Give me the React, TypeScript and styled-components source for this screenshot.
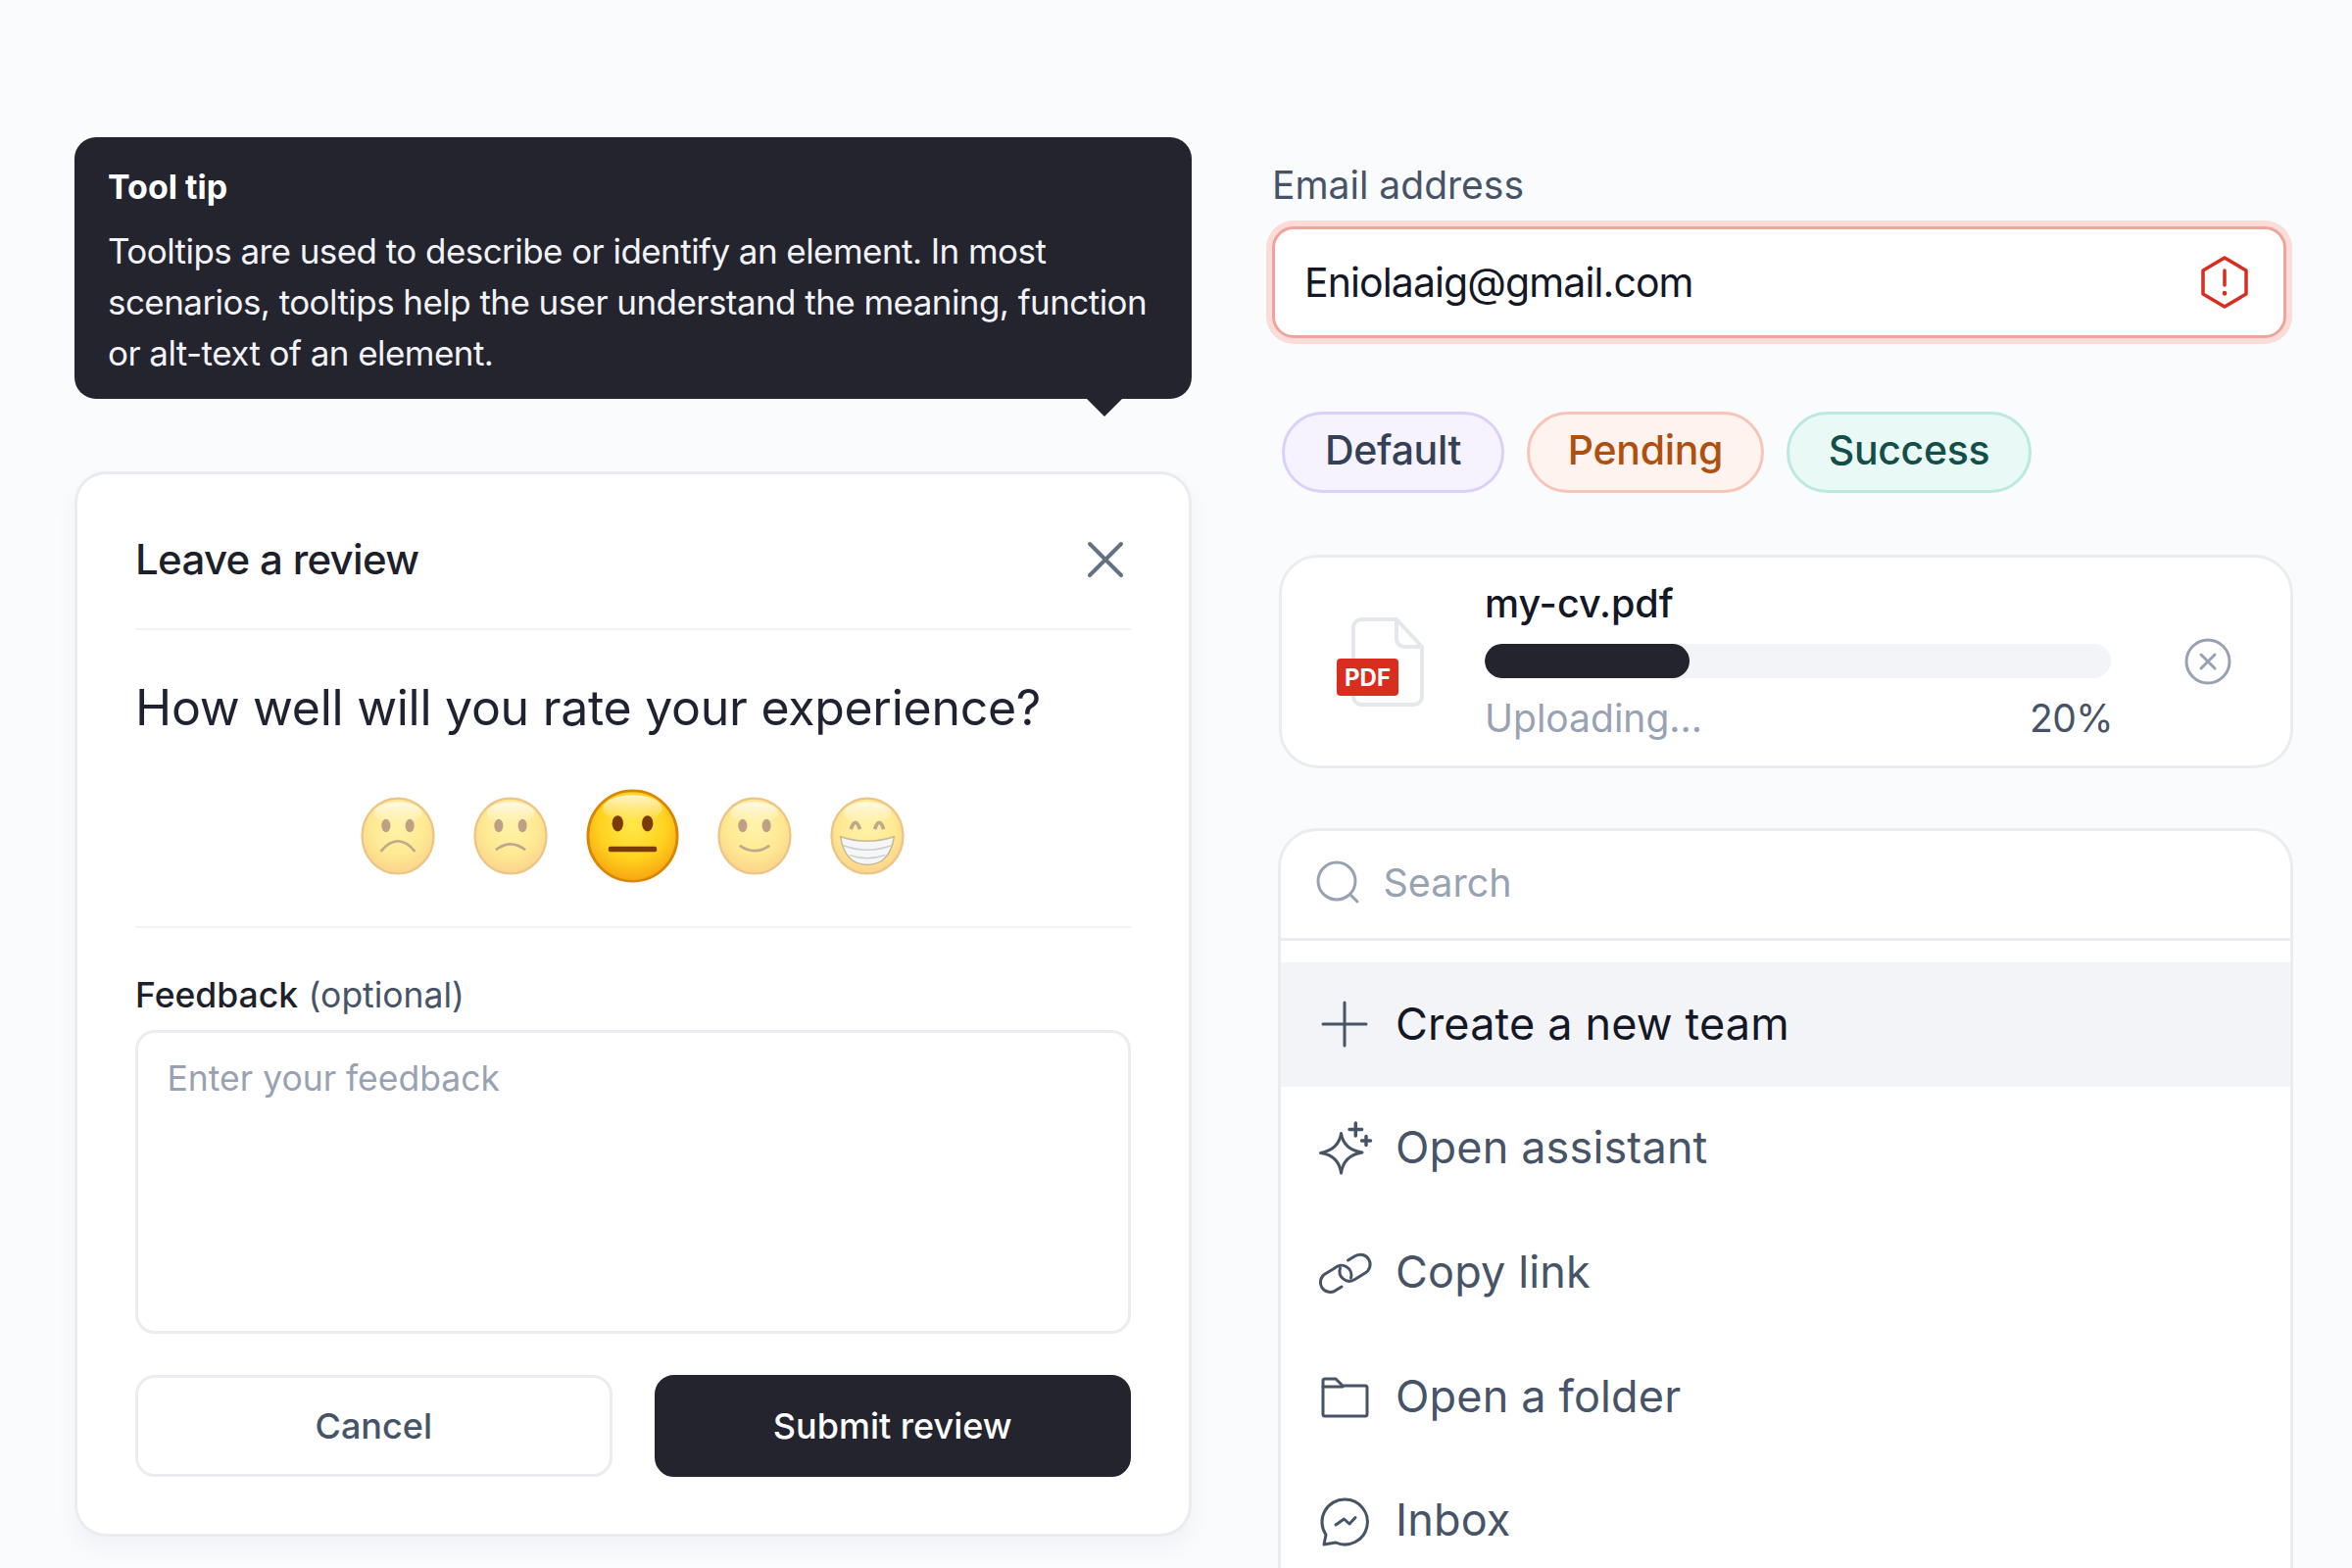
import React from 'react';
import styled, { createGlobalStyle } from 'styled-components';

const Global = createGlobalStyle`
  html, body { margin: 0; padding: 0; background: #fafbfd; }
  * { box-sizing: border-box; }
  body { font-family: Inter, "Noto Sans", sans-serif; -webkit-font-smoothing: antialiased; }
`;

const Page = styled.div`
  width: 2400px;
  height: 1600px;
  overflow: hidden;
  background: #fafbfd;
  display: grid;
  grid-template-columns: 1140px 1042px;
  column-gap: 82px;
  padding-left: 76px;
  align-items: start;
`;

const LeftColumn = styled.div`
  display: flex;
  flex-direction: column;
  padding-top: 140px;
`;

const Tooltip = styled.div`
  position: relative;
  height: 267px;
  background: #23242e;
  border-radius: 22px;
  padding: 27px 34px 0;
  color: #fff;
  &::after {
    content: '';
    position: absolute;
    right: 71px;
    bottom: -18px;
    border-left: 18px solid transparent;
    border-right: 18px solid transparent;
    border-top: 18px solid #23242e;
  }
`;

const TooltipTitle = styled.div`
  font-size: 34px;
  font-weight: 700;
  line-height: 48px;
`;

const TooltipBody = styled.div`
  margin-top: 15px;
  font-size: 35px;
  font-weight: 400;
  line-height: 52px;
  letter-spacing: -0.56px;
  white-space: nowrap;
  color: #f2f3f6;
`;

const Card = styled.div`
  margin: 74px 0 0;
  background: #fff;
  border: 3px solid #eaecf0;
  border-top-color: #e8eaee;
  border-radius: 32px;
  padding: 0 59px 58.5px;
  box-shadow: 0 12px 24px rgba(16, 24, 40, 0.04);
  display: flex;
  flex-direction: column;
`;

const CardHeader = styled.div`
  display: flex;
  align-items: center;
  justify-content: space-between;
  padding: 57px 0 39.5px;
  border-bottom: 2px solid #f2f4f7;
`;

const CardTitle = styled.div`
  font-size: 42px;
  line-height: 60px;
  font-weight: 500;
  color: #1d1f2a;
  letter-spacing: -0.7px;
`;

const CloseButton = styled.span`
  display: flex;
  margin-right: 7px;
  color: #667085;
`;

const Question = styled.div`
  margin-top: 49.5px;
  font-size: 50px;
  line-height: 60px;
  font-weight: 400;
  letter-spacing: -0.28px;
  color: #1f2230;
`;

const Faces = styled.div`
  margin-top: 53px;
  height: 96px;
  display: flex;
  align-items: center;
  justify-content: center;
  gap: 39px;
  padding: 0 1px 43.5px 0;
  box-sizing: content-box;
  border-bottom: 2px solid #f2f4f7;
`;

const FaceSvg = styled.svg<{ $active?: boolean }>`
  flex: none;
  width: ${p => (p.$active ? 95 : 76)}px;
  height: ${p => (p.$active ? 96 : 80)}px;
  opacity: ${p => (p.$active ? 1 : 0.48)};
`;

const FieldLabel = styled.div`
  margin-top: 49.5px;
  font-size: 35.5px;
  line-height: 40px;
  font-weight: 500;
  color: #1d1f2a;
`;

const Optional = styled.span`
  margin-left: 1px;
  font-weight: 400;
  color: #475467;
`;

const TextArea = styled.div`
  margin-top: 14.5px;
  height: 310px;
  border: 3px solid #eaecf0;
  border-radius: 20px;
  padding: 26px 29.5px;
  font-size: 35.5px;
  line-height: 42px;
  color: #98a2b3;
`;

const Buttons = styled.div`
  margin-top: 42px;
  display: flex;
  gap: 43px;
`;

const Button = styled.div<{ $primary?: boolean }>`
  flex: 1;
  height: 104px;
  display: flex;
  align-items: center;
  justify-content: center;
  border-radius: 20px;
  font-size: 36px;
  font-weight: 500;
  background: ${p => (p.$primary ? '#23242e' : '#fff')};
  color: ${p => (p.$primary ? '#fff' : '#475467')};
  border: 3px solid ${p => (p.$primary ? '#23242e' : '#eaecf0')};
`;

const RightColumn = styled.div`
  display: flex;
  flex-direction: column;
  padding-top: 167px;
  align-items: stretch;
`;

const EmailLabel = styled.div`
  font-size: 39px;
  line-height: 44px;
  color: #475467;
`;

const EmailInput = styled.div`
  margin: 20px 7px 0 0;
  height: 114px;
  background: #fff;
  border: 3px solid #f0a39c;
  border-radius: 22px;
  box-shadow: 0 0 0 6px #fbdcd8;
  display: flex;
  align-items: center;
  justify-content: space-between;
  padding: 0 35px 0 30px;
  font-size: 41px;
  letter-spacing: -0.9px;
  color: #141826;
`;

const Badges = styled.div`
  margin: 75px 0 0 10px;
  display: flex;
  gap: 23px;
`;

const tones = {
  default: { bg: '#f6f3fe', border: '#dcd0f9', color: '#344054', pad: 41 },
  pending: { bg: '#fef3ef', border: '#f7c5b8', color: '#b0500f', pad: 38.5 },
  success: { bg: '#e9f9f6', border: '#b9e9e1', color: '#134e48', pad: 40 },
};

const Badge = styled.div<{ $tone: keyof typeof tones }>`
  height: 83px;
  padding: 0 ${p => tones[p.$tone].pad}px 5px;
  display: flex;
  align-items: center;
  border-radius: 42px;
  font-size: 41px;
  font-weight: 500;
  letter-spacing: -0.3px;
  background: ${p => tones[p.$tone].bg};
  border: 3px solid ${p => tones[p.$tone].border};
  color: ${p => tones[p.$tone].color};
`;

const FileCard = styled.div`
  margin: 63px 0 0 7px;
  height: 218px;
  background: #fff;
  border: 3px solid #eaecf0;
  border-radius: 40px;
  display: flex;
  align-items: center;
  padding-left: 55px;
`;

const DocIcon = styled.svg`
  flex: none;
  width: 90px;
  height: 92px;
`;

const FileBody = styled.div`
  margin-left: 62px;
  width: 639px;
  padding-bottom: 3px;
  display: flex;
  flex-direction: column;
`;

const FileName = styled.div`
  font-size: 39.5px;
  line-height: 48px;
  font-weight: 500;
  color: #141826;
`;

const Track = styled.div`
  margin-top: 17px;
  height: 35px;
  border-radius: 18px;
  background: #f2f4f7;
  overflow: hidden;
`;

const Fill = styled.div`
  height: 100%;
  border-radius: 18px;
  background: #23242e;
`;

const FileFooter = styled.div`
  margin-top: 19px;
  display: flex;
  justify-content: space-between;
  font-size: 39px;
  line-height: 44px;
`;

const Uploading = styled.span`
  color: #98a2b3;
`;

const Percent = styled.span`
  margin-right: -2px;
  color: #475467;
  font-weight: 400;
  letter-spacing: -0.6px;
`;

const RemoveIcon = styled.svg`
  flex: none;
  margin-left: 75px;
  width: 48px;
  height: 48px;
`;

const MenuCard = styled.div`
  margin: 61px 0 0 6px;
  height: 800px;
  background: #fff;
  border: 3px solid #eaecf0;
  border-radius: 40px;
  overflow: hidden;
`;

const SearchRow = styled.div`
  height: 112px;
  border-bottom: 3px solid #eaecf0;
  display: flex;
  align-items: center;
  gap: 23px;
  padding: 0 0 3px 35.5px;
  font-size: 39.5px;
  color: #98a2b3;
`;

const SearchGlyph = styled.svg`
  flex: none;
  width: 46px;
  height: 46px;
`;

const IconBox = styled.svg`
  flex: none;
  width: 60px;
  height: 60px;
  color: #475467;
`;

const MenuLabel = styled.span`
  margin-top: -2px;
`;

const MenuList = styled.div`
  margin-top: 22px;
`;

const MenuRow = styled.div<{ $active?: boolean }>`
  height: 126.6px;
  display: flex;
  align-items: center;
  gap: 22px;
  padding-left: 35px;
  font-size: 45px;
  background: ${p => (p.$active ? '#f2f4f7' : 'transparent')};
  color: ${p => (p.$active ? '#141826' : '#475467')};
  letter-spacing: 0.15px;
`;

const Face: React.FC<{ kind: 'bad' | 'meh' | 'neutral' | 'good' | 'great'; active?: boolean }> = ({ kind, active }) => {
  const id = `face-${kind}`;
  return (
    <FaceSvg $active={active} viewBox="0 0 100 106" preserveAspectRatio="none" aria-hidden>
      <defs>
        <radialGradient id={id} cx="50%" cy="38%" r="68%">
          <stop offset="0%" stopColor="#ffe84a" />
          <stop offset="55%" stopColor="#ffd21f" />
          <stop offset="100%" stopColor="#f59a0c" />
        </radialGradient>
        <linearGradient id={`${id}-shine`} x1="0" y1="0" x2="0" y2="1">
          <stop offset="0%" stopColor="#fff" stopOpacity="0.75" />
          <stop offset="100%" stopColor="#fff" stopOpacity="0" />
        </linearGradient>
      </defs>
      <ellipse cx="50" cy="53" rx="48" ry="51" fill={`url(#${id})`} stroke="#d98605" strokeWidth="3" />
      <ellipse cx="50" cy="22" rx="32" ry="15" fill={`url(#${id}-shine)`} />
      {kind !== 'great' && (
        <>
          <ellipse cx="34" cy="39" rx="6" ry="9" fill="#7a3b06" />
          <ellipse cx="66" cy="39" rx="6" ry="9" fill="#7a3b06" />
        </>
      )}
      {kind === 'bad' && <path d="M27 74Q50 46 73 74" fill="none" stroke="#7a4a10" strokeWidth="3.5" />}
      {kind === 'meh' && <path d="M30 72Q50 56 70 72" fill="none" stroke="#7a4a10" strokeWidth="3.5" />}
      {kind === 'neutral' && <rect x="24" y="65" width="52" height="6" rx="2" fill="#7a3b06" />}
      {kind === 'good' && <path d="M30 66Q50 80 70 66" fill="none" stroke="#7a4a10" strokeWidth="3.5" />}
      {kind === 'great' && (
        <>
          <path d="M28 44Q34 26 40 44M60 44Q66 26 72 44" fill="none" stroke="#7a4a10" strokeWidth="5" />
          <path d="M14 54Q50 66 86 54Q80 92 50 92Q20 92 14 54Z" fill="#e9edf0" stroke="#8a6a2a" strokeWidth="2" />
          <path d="M18 66Q50 78 82 66M26 79Q50 87 74 79" fill="none" stroke="#8f98a1" strokeWidth="2" />
        </>
      )}
    </FaceSvg>
  );
};

const stroke = { fill: 'none', stroke: 'currentColor', strokeWidth: 3, strokeLinecap: 'round', strokeLinejoin: 'round' } as const;

export default function App() {
  return (
    <Page>
      <Global />
      <LeftColumn>
        <Tooltip>
          <TooltipTitle>Tool tip</TooltipTitle>
          <TooltipBody>
            Tooltips are used to describe or identify an element. In most
            <br />
            scenarios, tooltips help the user understand the meaning, function
            <br />
            or alt-text of an element.
          </TooltipBody>
        </Tooltip>
        <Card>
          <CardHeader>
            <CardTitle>Leave a review</CardTitle>
            <CloseButton>
              <svg width="38" height="38" viewBox="0 0 38 38" fill="none" stroke="currentColor" strokeWidth="4" strokeLinecap="round">
                <path d="M3 3L35 35M35 3L3 35" />
              </svg>
            </CloseButton>
          </CardHeader>
          <Question>How well will you rate your experience?</Question>
          <Faces>
            <Face kind="bad" />
            <Face kind="meh" />
            <Face kind="neutral" active />
            <Face kind="good" />
            <Face kind="great" />
          </Faces>
          <FieldLabel>
            Feedback <Optional>(optional)</Optional>
          </FieldLabel>
          <TextArea>Enter your feedback</TextArea>
          <Buttons>
            <Button>Cancel</Button>
            <Button $primary>Submit review</Button>
          </Buttons>
        </Card>
      </LeftColumn>
      <RightColumn>
        <EmailLabel>Email address</EmailLabel>
        <EmailInput>
          Eniolaaig@gmail.com
          <svg width="50" height="54" viewBox="0 0 50 54" fill="none" stroke="#d92d20" strokeWidth="3.5" strokeLinejoin="round" strokeLinecap="round">
            <path d="M25 2L47 15V39L25 52L3 39V15Z" />
            <path d="M25 15V30" />
            <path d="M25 38V38.5" strokeWidth="4.5" />
          </svg>
        </EmailInput>
        <Badges>
          <Badge $tone="default">Default</Badge>
          <Badge $tone="pending">Pending</Badge>
          <Badge $tone="success">Success</Badge>
        </Badges>
        <FileCard>
          <DocIcon viewBox="0 0 90 92">
            <path d="M26 3H62L88 31V82A8 8 0 0 1 80 90H26A8 8 0 0 1 18 82V11A8 8 0 0 1 26 3Z" fill="#fff" stroke="#e4e7ec" strokeWidth="4" />
            <path d="M62 3V23A8 8 0 0 0 70 31H88" fill="none" stroke="#e4e7ec" strokeWidth="4" />
            <rect x="1" y="43" width="63" height="38" rx="4" fill="#d92d20" />
            <text x="32.5" y="70.5" textAnchor="middle" fontSize="24" fontWeight="700" fontFamily="Inter, sans-serif" fill="#fff">PDF</text>
          </DocIcon>
          <FileBody>
            <FileName>my-cv.pdf</FileName>
            <Track>
              <Fill style={{ width: '32.7%' }} />
            </Track>
            <FileFooter>
              <Uploading>Uploading...</Uploading>
              <Percent>20%</Percent>
            </FileFooter>
          </FileBody>
          <RemoveIcon viewBox="0 0 48 48" fill="none" stroke="#98a2b3" strokeWidth="3" strokeLinecap="round">
            <circle cx="24" cy="24" r="22" />
            <path d="M17 17L31 31M31 17L17 31" />
          </RemoveIcon>
        </FileCard>
        <MenuCard>
          <SearchRow>
            <SearchGlyph viewBox="0 0 46 46" fill="none" stroke="#98a2b3" strokeWidth="3" strokeLinecap="round">
              <circle cx="21" cy="21" r="19" />
              <path d="M35 35L42 42" />
            </SearchGlyph>
            Search
          </SearchRow>
          <MenuList>
            <MenuRow $active>
              <IconBox viewBox="0 0 60 60" {...stroke}>
                <path d="M8 30H52M30 8V52" />
              </IconBox>
              <MenuLabel>Create a new team</MenuLabel>
            </MenuRow>
            <MenuRow>
              <IconBox viewBox="0 0 60 60" {...stroke}>
                <path d="M26.5 14.5Q29 31 48 34Q29 37 26.5 55Q24 37 5.5 34.5Q24 31 26.5 14.5Z" />
                <path d="M41.3 4V17M35 10.5H47.6" strokeWidth="3.5" />
                <path d="M52 17.5V26.5M47.5 22H56.5" strokeWidth="3.5" />
              </IconBox>
              <MenuLabel>Open assistant</MenuLabel>
            </MenuRow>
            <MenuRow>
              <IconBox viewBox="0 0 60 60" {...stroke}>
                <path d="M27 45L20 49.3A10 10 0 0 1 10 32L20 26A10 10 0 0 1 36.5 36" />
                <path d="M33.5 18L41 13.5A10 10 0 0 1 51 31L40.5 37.5A10 10 0 0 1 25.5 26" />
              </IconBox>
              <MenuLabel>Copy link</MenuLabel>
            </MenuRow>
            <MenuRow>
              <IconBox viewBox="0 0 60 60" {...stroke}>
                <path d="M8 14A2 2 0 0 1 10 12H21L28 19H51A2 2 0 0 1 53 21V48A2 2 0 0 1 51 50H10A2 2 0 0 1 8 48Z" />
                <path d="M8 20H28" />
              </IconBox>
              <MenuLabel>Open a folder</MenuLabel>
            </MenuRow>
            <MenuRow>
              <IconBox viewBox="0 0 60 60" {...stroke}>
                <path d="M30.5 8A23 23 0 1 1 21 52L9 54L11 44A23 23 0 0 1 30.5 8Z" />
                <path d="M21 34L29.5 28L35 33L41 26.5" />
              </IconBox>
              <MenuLabel>Inbox</MenuLabel>
            </MenuRow>
          </MenuList>
        </MenuCard>
      </RightColumn>
    </Page>
  );
}
